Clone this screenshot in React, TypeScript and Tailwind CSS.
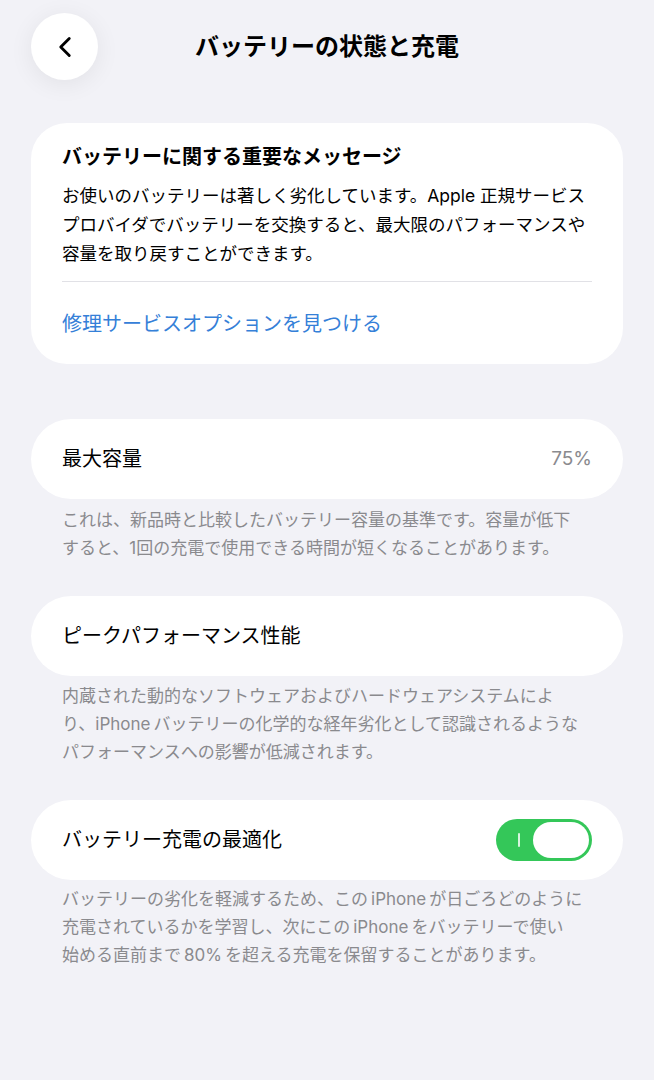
import { ChevronLeft } from "lucide-react";

const font = { fontFamily: 'Inter, "Noto Sans CJK JP", sans-serif' };

function Toggle() {
  return (
    <div className="relative flex h-[42px] w-[96px] items-center rounded-full bg-[#34c759] p-[3px]">
      <div className="ml-[19px] h-[14px] w-[2px] rounded-full bg-white/80" />
      <div className="ml-auto h-[36px] w-[56px] rounded-full bg-white" />
    </div>
  );
}

function Row({ label, children }: { label: string; children?: React.ReactNode }) {
  return (
    <div className="flex h-[80px] items-center justify-between rounded-full bg-white px-[31px]">
      <span className="text-[20px] text-black">{label}</span>
      {children}
    </div>
  );
}

function Footnote({ lines }: { lines: string[] }) {
  return (
    <p className="px-[31px] text-[17px] leading-[28px] whitespace-nowrap text-[#8a8a8e]">
      {lines.map((l, i) => (
        <span key={i} className="block">
          {l}
        </span>
      ))}
    </p>
  );
}

export default function App() {
  return (
    <div className="min-h-[1080px] w-full bg-[#f2f2f7] px-[31px]" style={font}>
      <header className="relative flex h-[94px] items-start justify-center pt-[13px]">
        <button className="absolute left-0 top-[13px] flex h-[67px] w-[67px] items-center justify-center rounded-full bg-white shadow-[0_4px_24px_rgba(0,0,0,0.07)]">
          <ChevronLeft className="h-[34px] w-[34px] text-black" strokeWidth={2} />
        </button>
        <h1 className="mt-[20px] text-[24px] leading-[28px] font-bold text-black">
          バッテリーの状態と充電
        </h1>
      </header>

      <section className="mt-[29px] rounded-[36px] bg-white px-[31px] pt-[20px] pb-[26px]">
        <h2 className="text-[20px] leading-[28px] font-bold text-black">
          バッテリーに関する重要なメッセージ
        </h2>
        <p className="mt-[10px] text-[17.5px] leading-[29px] whitespace-nowrap text-black">
          <span className="block">お使いのバッテリーは著しく劣化しています。Apple 正規サービス</span>
          <span className="block">プロバイダでバッテリーを交換すると、最大限のパフォーマンスや</span>
          <span className="block">容量を取り戻すことができます。</span>
        </p>
        <div className="mt-[13px] h-px bg-[#e1e1e6]" />
        <a className="mt-[28px] block text-[20px] leading-[28px] text-[#3580d8]">
          修理サービスオプションを見つける
        </a>
      </section>

      <div className="mt-[55px]">
        <Row label="最大容量">
          <span className="text-[19px] text-[#8a8a8e]">75%</span>
        </Row>
        <div className="mt-[7px]">
          <Footnote
            lines={[
              "これは、新品時と比較したバッテリー容量の基準です。容量が低下",
              "すると、1回の充電で使用できる時間が短くなることがあります。",
            ]}
          />
        </div>
      </div>

      <div className="mt-[34px]">
        <Row label="ピークパフォーマンス性能" />
        <div className="mt-[6px]">
          <Footnote
            lines={[
              "内蔵された動的なソフトウェアおよびハードウェアシステムによ",
              "り、iPhone\u2009バッテリーの化学的な経年劣化として認識されるような",
              "パフォーマンスへの影響が低減されます。",
            ]}
          />
        </div>
      </div>

      <div className="mt-[34px]">
        <Row label="バッテリー充電の最適化">
          <Toggle />
        </Row>
        <div className="mt-[5px]">
          <Footnote
            lines={[
              "バッテリーの劣化を軽減するため、この\u2009iPhone\u2009が日ごろどのように",
              "充電されているかを学習し、次にこの\u2009iPhone\u2009をバッテリーで使い",
              "始める直前まで\u200980%\u2009を超える充電を保留することがあります。",
            ]}
          />
        </div>
      </div>
    </div>
  );
}
